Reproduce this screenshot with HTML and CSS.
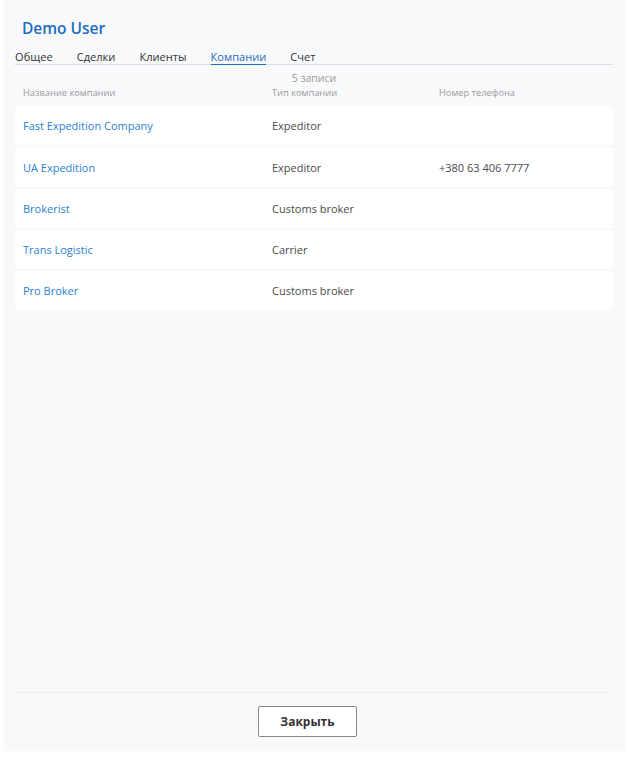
FILE: index.html
```html
<!DOCTYPE html>
<html lang="ru">
<head>
  <meta charset="UTF-8" />
  <title>Demo User</title>
  <link rel="stylesheet" href="styles.css">
</head>
<body>
  <div class="panel">
    <h1 class="title">Demo User</h1>

    <!-- Tabs -->
    <nav class="tabs">
      <span class="tab">Общее</span>
      <span class="tab">Сделки</span>
      <span class="tab">Клиенты</span>
      <span class="tab active">Компании</span>
      <span class="tab">Счет</span>
    </nav>

    <div class="count">5 записи</div>

    <div class="table">
      <div class="row head">
        <span>Название компании</span>
        <span>Тип компании</span>
        <span>Номер телефона</span>
      </div>
      <div class="row item">
        <a href="#">Fast Expedition Company</a>
        <span>Expeditor</span>
        <span></span>
      </div>
      <div class="row item">
        <a href="#">UA Expedition</a>
        <span>Expeditor</span>
        <span>+380 63 406 7777</span>
      </div>
      <div class="row item">
        <a href="#">Brokerist</a>
        <span>Customs broker</span>
        <span></span>
      </div>
      <div class="row item">
        <a href="#">Trans Logistic</a>
        <span>Carrier</span>
        <span></span>
      </div>
      <div class="row item">
        <a href="#">Pro Broker</a>
        <span>Customs broker</span>
        <span></span>
      </div>
    </div>

    <div class="footer">
      <button class="close-btn">Закрыть</button>
    </div>
  </div>
</body>
</html>
```

FILE: styles.css
```css
body {
  margin: 0;
  background: #fff;
  font-family: 'Open Sans', sans-serif;
  color: #444;
}

.panel {
  margin: 0 5px 0 4px;
  height: 751px;
  background: #f8f9fb;
  padding: 0 11px;
  display: flex;
  flex-direction: column;
}

.title {
  margin: 18px 0 0 7px;
  font-size: 15.5px;
  font-weight: 600;
  color: #1e6cc0;
  line-height: 21px;
}

.tabs {
  display: flex;
  gap: 24px;
  margin-top: 10px;
  border-bottom: 1px solid #d9dde3;
  font-size: 11.1px;
  line-height: 15px;
  width: 598px;
}

.tab {
  color: #333;
}

.tab.active {
  color: #1e6cc0;
  border-bottom: 1px solid #1e6cc0;
  margin-bottom: -1px;
}

.count {
  text-align: center;
  font-size: 10.5px;
  color: #9a9a9a;
  margin-top: 6px;
  line-height: 14px;
  width: 598px;
}

.table {
  width: 598px;
  display: flex;
  flex-direction: column;
  gap: 2.25px;
}

.row {
  display: grid;
  grid-template-columns: 249px 167px 1fr;
  padding-left: 8px;
  align-items: center;
}

.row.head {
  font-size: 9.3px;
  color: #9a9a9a;
  height: 15px;
  margin-bottom: 4px;
}

.row.item {
  background: #fff;
  height: 39px;
  font-size: 11px;
  color: #4a4a4a;
}

.row.item a {
  color: #2a7fd4;
  text-decoration: none;
}

.footer {
  margin-top: auto;
  width: 598px;
  margin-left: -3px;
  border-top: 1px solid #eceef1;
  display: flex;
  justify-content: center;
  padding: 13px 0 14px;
}

.close-btn {
  width: 99px;
  height: 31px;
  background: #fff;
  border: 1px solid #888;
  border-radius: 2px;
  font-family: 'Open Sans', sans-serif;
  font-weight: 700;
  font-size: 12px;
  color: #333;
  margin-left: -7px;
}
```
